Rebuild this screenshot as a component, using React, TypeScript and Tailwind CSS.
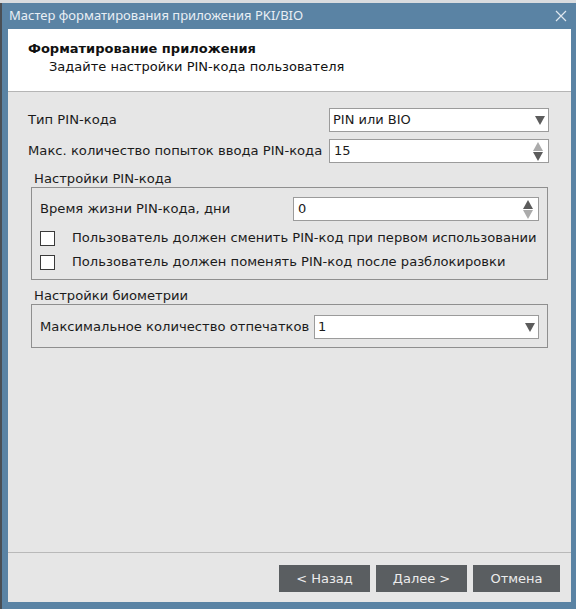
import * as React from 'react'

const font = { fontFamily: '"DejaVu Sans", "Liberation Sans", sans-serif' }

function ArrowDown({ className }: { className?: string }) {
  return (
    <svg width="10" height="9" viewBox="0 0 10 9" className={className}>
      <path d="M0 0 H10 L5 9 Z" fill="currentColor" />
    </svg>
  )
}

function ComboBox({ value, className }: { value: string; className?: string }) {
  return (
    <div
      className={`flex h-[24px] items-center justify-between border border-[#9b9b9b] bg-white pl-[3px] pr-[3px] text-[13px] text-[#1b1b1b] ${className ?? ''}`}
    >
      <span>{value}</span>
      <ArrowDown className="text-[#5c5c5c]" />
    </div>
  )
}

function SpinBox({
  value,
  upOn,
  downOn,
  className,
}: {
  value: string
  upOn: boolean
  downOn: boolean
  className?: string
}) {
  return (
    <div
      className={`flex h-[24px] items-center justify-between border border-[#9b9b9b] bg-white pl-[4px] pr-[5px] text-[13px] text-[#1b1b1b] ${className ?? ''}`}
    >
      <span>{value}</span>
      <div className="flex flex-col gap-[1px]">
        <svg width="10" height="9" viewBox="0 0 10 9">
          <path d="M5 0 L10 9 H0 Z" fill={upOn ? '#5c5c5c' : '#ababab'} />
        </svg>
        <svg width="10" height="9" viewBox="0 0 10 9">
          <path d="M0 0 H10 L5 9 Z" fill={downOn ? '#5c5c5c' : '#ababab'} />
        </svg>
      </div>
    </div>
  )
}

function CheckRow({ label }: { label: string }) {
  return (
    <div className="flex h-[24px] items-center">
      <div className="h-[15px] w-[15px] border-[1.5px] border-[#3a3a3a] bg-white" />
      <span className="ml-[17px] text-[13.1px] text-[#1b1b1b]">{label}</span>
    </div>
  )
}

function Button({ children, className }: { children: React.ReactNode; className?: string }) {
  return (
    <button
      className={`flex h-[27px] items-center justify-center bg-[#5a5e61] text-[13px] text-[#ececec] ${className ?? ''}`}
    >
      {children}
    </button>
  )
}

export default function App() {
  return (
    <div className="flex h-[609px] w-[576px] flex-col bg-[#4a4f55]" style={font}>
      <div className="h-[3px] bg-[#d9dcdf]" />
      <div className="ml-[2px] flex flex-1 flex-col bg-[#5a83a4]">
        {/* title bar */}
        <div className="flex h-[26px] items-center justify-between pl-[7px] pr-[9px]">
          <span
            className="text-[13px] text-[#e9eff5]"
            style={{ fontFamily: '"Noto Sans", "DejaVu Sans", sans-serif' }}
          >
            Мастер форматирования приложения PKI/BIO
          </span>
          <svg width="12" height="12" viewBox="0 0 12 12">
            <path d="M1 1 L11 11 M11 1 L1 11" stroke="#dfe7ef" strokeWidth="1.2" />
          </svg>
        </div>

        <div className="mb-[7px] ml-[6px] mr-[5px] flex flex-1 flex-col bg-[#e6e6e6]">
          {/* header */}
          <div className="h-[63px] border-b border-[#b5b5b5] bg-white pl-[20px] pt-[11px] text-[13px] text-[#111]">
            <div className="font-bold leading-[18px]">Форматирование приложения</div>
            <div className="pl-[21px] leading-[17px]">Задайте настройки PIN-кода пользователя</div>
          </div>

          {/* body */}
          <div className="flex flex-1 flex-col pl-[20px] pr-[22px] pt-[16px] text-[13.15px] text-[#1b1b1b]">
            <div className="flex items-center justify-between">
              <span>Тип PIN-кода</span>
              <ComboBox value="PIN или BIO" className="w-[220px]" />
            </div>
            <div className="mt-[7px] flex items-center justify-between">
              <span>Макс. количество попыток ввода PIN-кода</span>
              <SpinBox value="15" upOn={false} downOn={true} className="w-[220px]" />
            </div>

            <div className="ml-[3px] mr-[1px] mt-[8px]">
              <div className="pl-[3px] leading-[16px]">Настройки PIN-кода</div>
              <div className="border border-[#8f8f8f] px-[8px] pb-[5px] pt-[9px]">
                <div className="flex items-center justify-between">
                  <span>Время жизни PIN-кода, дни</span>
                  <SpinBox value="0" upOn={true} downOn={false} className="w-[246px]" />
                </div>
                <div className="mt-[5px]">
                  <CheckRow label="Пользователь должен сменить PIN-код при первом использовании" />
                  <CheckRow label="Пользователь должен поменять PIN-код после разблокировки" />
                </div>
              </div>
            </div>

            <div className="ml-[3px] mr-[1px] mt-[8px]">
              <div className="pl-[3px] leading-[16px]">Настройки биометрии</div>
              <div className="border border-[#8f8f8f] px-[8px] pb-[8px] pt-[10px]">
                <div className="flex items-center justify-between">
                  <span>Максимальное количество отпечатков</span>
                  <ComboBox value="1" className="w-[225px]" />
                </div>
              </div>
            </div>
          </div>

          {/* footer */}
          <div className="h-[50px] border-t border-[#b9b9b9] pt-[12px]">
            <div className="flex justify-end gap-[6px] pr-[11px]">
              <Button className="w-[91px]">&lt; Назад</Button>
              <Button className="w-[91px]">Далее &gt;</Button>
              <Button className="w-[87px]">Отмена</Button>
            </div>
          </div>
        </div>
      </div>
    </div>
  )
}
